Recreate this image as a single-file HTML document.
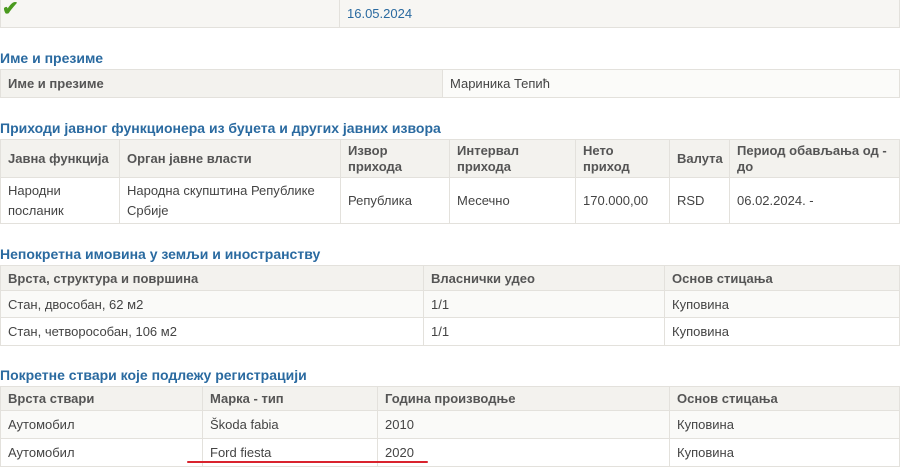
<!DOCTYPE html><html><head><meta charset="utf-8"><style>
body{margin:0;width:900px;height:470px;background:#fff;font-family:"Liberation Sans",sans-serif;position:relative;overflow:hidden;color:#444;font-size:13px}
.h{position:absolute;left:0;color:#2a6aa0;font-weight:bold;font-size:14px}
table{position:absolute;left:0;width:900px;border-collapse:collapse;table-layout:fixed;font-size:13px}
td,th{border:1px solid #e3e1dc;padding:3px 7px;text-align:left;vertical-align:middle;line-height:17px}
th{background:#f3f2ee;color:#555;font-weight:bold}
td{background:#fff}
tr.a td{background:#fafaf8}
.t3 td,.t3 th{padding:1px 7px;line-height:16px}
</style></head><body>
<table style="top:-1px;height:29px"><tr><td style="width:324px;background:#f7f6f3"><span style="color:#4a9a1e;font-size:20px;font-weight:bold;position:relative;top:-4px;left:-6px">✔</span></td><td style="background:#f7f6f3;color:#2a6aa0">16.05.2024</td></tr></table>
<div class="h" style="top:50px">Име и презиме</div>
<table style="top:69px;height:29px"><tr><th style="width:427px">Име и презиме</th><td style="background:#fbfbf9">Мариника Тепић</td></tr></table>
<div class="h" style="top:120px">Приходи јавног функционера из буџета и других јавних извора</div>
<table class="t3" style="top:139px"><colgroup><col style="width:119px"><col style="width:221px"><col style="width:109px"><col style="width:126px"><col style="width:94px"><col style="width:60px"><col></colgroup>
<tr style="height:38px"><th>Јавна функција</th><th>Орган јавне власти</th><th>Извор прихода</th><th>Интервал прихода</th><th>Нето приход</th><th>Валута</th><th>Период обављања од - до</th></tr>
<tr style="height:46px"><td style="line-height:20px">Народни посланик</td><td style="line-height:20px">Народна скупштина Републике Србије</td><td>Република</td><td>Месечно</td><td>170.000,00</td><td>RSD</td><td>06.02.2024. -</td></tr></table>
<div class="h" style="top:246px">Непокретна имовина у земљи и иностранству</div>
<table style="top:265px"><colgroup><col style="width:423px"><col style="width:241px"><col></colgroup>
<tr style="height:25px"><th>Врста, структура и површина</th><th>Власнички удео</th><th>Основ стицања</th></tr>
<tr class="a" style="height:27px"><td>Стан, двособан, 62 м2</td><td>1/1</td><td>Куповина</td></tr>
<tr style="height:28px"><td>Стан, четворособан, 106 м2</td><td>1/1</td><td>Куповина</td></tr></table>
<div class="h" style="top:367px">Покретне ствари које подлежу регистрацији</div>
<table style="top:386px"><colgroup><col style="width:202px"><col style="width:175px"><col style="width:292px"><col></colgroup>
<tr style="height:24px"><th>Врста ствари</th><th>Марка - тип</th><th>Година производње</th><th>Основ стицања</th></tr>
<tr class="a" style="height:28px"><td>Аутомобил</td><td>Škoda fabia</td><td>2010</td><td>Куповина</td></tr>
<tr style="height:28px"><td>Аутомобил</td><td>Ford fiesta</td><td>2020</td><td>Куповина</td></tr></table>
<div style="position:absolute;left:187px;top:461px;width:241px;height:2px;background:#d9232d;border-radius:2px"></div>
</body></html>
